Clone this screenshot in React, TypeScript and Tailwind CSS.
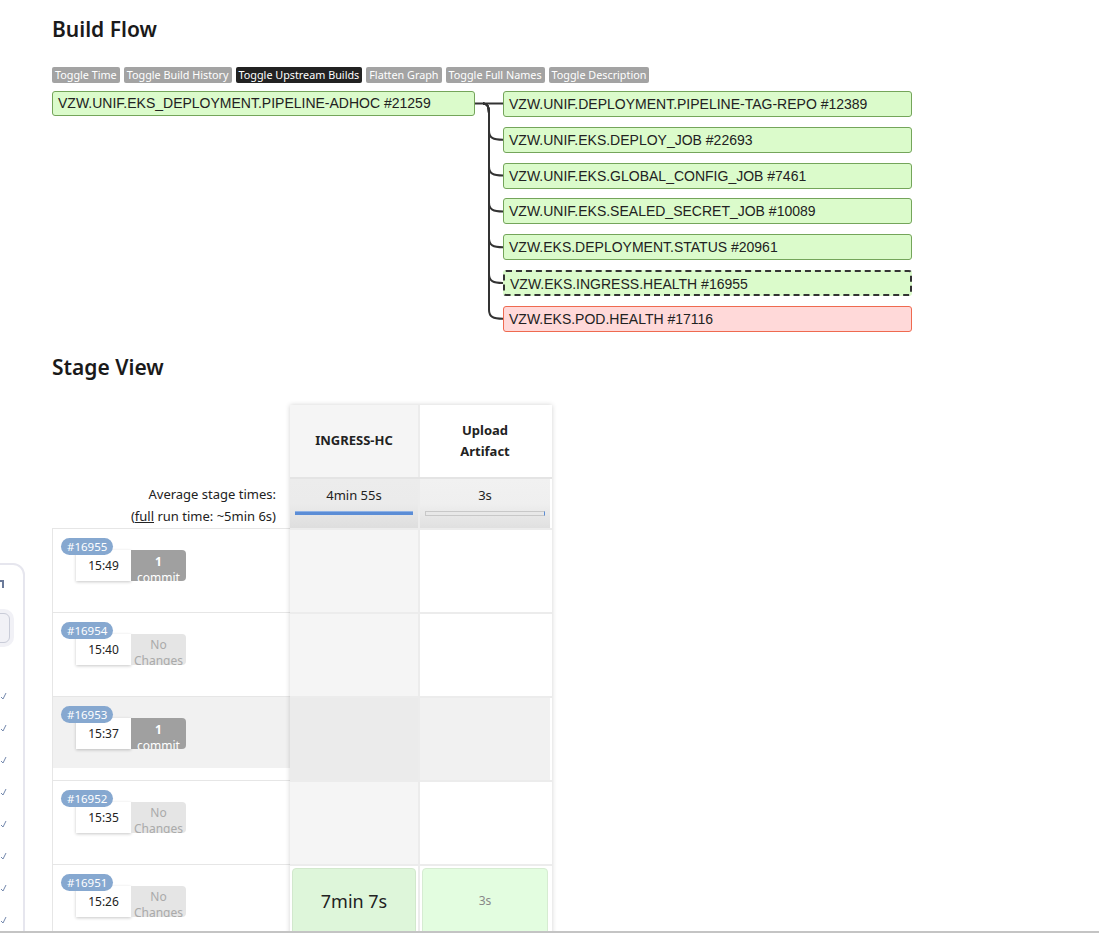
import React from "react";

const ui = { fontFamily: '"Noto Sans", "Open Sans", sans-serif' };
const arial = { fontFamily: '"Liberation Sans", Arial, sans-serif' };

const toggles = [
    { label: "Toggle Time", dark: false },
    { label: "Toggle Build History", dark: false },
    { label: "Toggle Upstream Builds", dark: true },
    { label: "Flatten Graph", dark: false },
    { label: "Toggle Full Names", dark: false },
    { label: "Toggle Description", dark: false },
];

const children = [
    { name: "VZW.UNIF.DEPLOYMENT.PIPELINE-TAG-REPO #12389", kind: "ok" },
    { name: "VZW.UNIF.EKS.DEPLOY_JOB #22693", kind: "ok" },
    { name: "VZW.UNIF.EKS.GLOBAL_CONFIG_JOB #7461", kind: "ok" },
    { name: "VZW.UNIF.EKS.SEALED_SECRET_JOB #10089", kind: "ok" },
    { name: "VZW.EKS.DEPLOYMENT.STATUS #20961", kind: "ok" },
    { name: "VZW.EKS.INGRESS.HEALTH #16955", kind: "running" },
    { name: "VZW.EKS.POD.HEALTH #17116", kind: "failed" },
];

const builds = [
    { id: "#16955", time: "15:49", commits: 1, shaded: false },
    { id: "#16954", time: "15:40", commits: 0, shaded: false },
    { id: "#16953", time: "15:37", commits: 1, shaded: true },
    { id: "#16952", time: "15:35", commits: 0, shaded: false },
    { id: "#16951", time: "15:26", commits: 0, shaded: false },
];

const nodeClass = (kind: string) => {
    if (kind === "failed") return "bg-[#ffd9d9] border border-[#ef6a50]";
    if (kind === "running") return "bg-[#dbfbcb] border-2 border-dashed border-[#333]";
    return "bg-[#dbfbcb] border border-[#74a55a]";
};

// connector lines between root job and its downstream jobs
const Connectors = () => {
    const pitch = 35.8;
    const top = 13;
    return (
        <svg width="28" height="245" className="shrink-0">
            <path d="M0 12.5 H28" stroke="#333" strokeWidth="2" fill="none" />
            {children.slice(1).map((_, i) => {
                const cy = top + pitch * (i + 1);
                return (
                    <path
                        key={i}
                        d={`M8 12.5 C13 12.5 14 16 14 22 V${cy - 9} C14 ${cy - 2} 18 ${cy} 28 ${cy}`}
                        stroke="#333"
                        strokeWidth="2"
                        fill="none"
                    />
                );
            })}
        </svg>
    );
};

const BuildRow = ({ b }: { b: (typeof builds)[number] }) => (
    <div className="h-[84px] border-t border-[#e6e6e6] border-l border-l-[#e6e6e6]">
        <div className={`h-[71px] ${b.shaded ? "bg-[#f1f1f1]" : ""} pt-[9px] flex flex-col`}>
            <span className="relative z-10 self-start ml-[8px] h-[17px] px-[6px] rounded-full bg-[#86a8d0] text-white text-[11.5px] leading-[17px]">
                {b.id}
            </span>
            <div className="flex ml-[23px] mt-[-5px]">
                <div className="w-[55px] h-[31px] bg-white shadow-[0_1px_3px_rgba(0,0,0,0.22)] flex items-center justify-center text-[12px] text-[#222]">
                    {b.time}
                </div>
                {b.commits > 0 ? (
                    <div className="w-[55px] h-[31px] overflow-hidden rounded-r-[4px] bg-[#a0a0a0] text-white text-center text-[12px] leading-[16px] pt-[4px]">
                        <div className="font-bold">{b.commits}</div>
                        <div>commit</div>
                    </div>
                ) : (
                    <div className="w-[55px] h-[31px] overflow-hidden rounded-r-[4px] bg-[#e5e5e5] text-[#aaa] text-center text-[12px] leading-[16px] pt-[3px]">
                        <div>No</div>
                        <div>Changes</div>
                    </div>
                )}
            </div>
        </div>
    </div>
);

const StageRow = ({ i }: { i: number }) => {
    const shaded = builds[i].shaded;
    if (i === 4) {
        return (
            <div className="flex h-[84px] border-t-2 border-[#ececec]">
                <div className="w-[130px] border-r-2 border-[#ececec] px-[2px] pt-[2px]">
                    <div className="h-full rounded-[4px] border border-[#d2e8cd] bg-[#def6da] flex items-center justify-center text-[18px] text-[#222] pb-[14px]">
                        7min 7s
                    </div>
                </div>
                <div className="w-[130px] px-[2px] pt-[2px]">
                    <div className="h-full rounded-[4px] border border-[#d6ecd2] bg-[#e3fde0] flex items-center justify-center text-[12px] text-[#888] pb-[14px]">
                        3s
                    </div>
                </div>
            </div>
        );
    }
    return (
        <div className="flex h-[84px] border-t-2 border-[#ececec]">
            <div className={`w-[130px] border-r-2 border-[#ececec] ${shaded ? "bg-[#ebebeb]" : "bg-[#f5f5f5]"}`} />
            <div className={`w-[130px] ${shaded ? "bg-[#f1f1f1]" : "bg-white"}`} />
        </div>
    );
};

export default function App() {
    return (
        <div
            className="relative h-[933px] overflow-hidden bg-white border-b-2 border-[#c4c4c4] text-[#222]"
            style={ui}
        >
            {/* collapsed side panel peeking in from the left */}
            <div className="absolute left-[-50px] top-[563px] w-[75px] h-[420px] rounded-[12px] border-2 border-[#e6e6ee] bg-white">
                <div className="ml-[46px] mt-[15px] w-[6px] h-[8px] border-t-2 border-r-2 border-[#6b7a99]" />
                <div className="ml-[20px] mt-[21px] w-[42px] h-[38px] rounded-[10px] bg-[#f1f1f6] p-[4px]">
                    <div className="w-full h-full rounded-[6px] border border-[#c9ccd8]" />
                </div>
                <div className="flex flex-col mt-[42px] gap-[20px] ml-[49px]">
                    {Array.from({ length: 8 }).map((_, i) => (
                        <svg key={i} width="6" height="12" viewBox="0 0 6 12">
                            <path d="M0 8 L2 10 L5 4" stroke="#7388ad" strokeWidth="1" fill="none" />
                        </svg>
                    ))}
                </div>
            </div>

            <div className="pl-[52px]">
                {/* Build Flow */}
                <h2 className="pt-[14px] text-[21px] leading-[30px] font-semibold text-[#1a1a1a]">Build Flow</h2>

                <div className="flex gap-[4px] mt-[23px]">
                    {toggles.map((t) => (
                        <span
                            key={t.label}
                            className={`h-[16px] px-[3px] rounded-[2px] text-[10.8px] leading-[16px] text-white ${
                                t.dark ? "bg-[#222]" : "bg-[#a3a3a3]"
                            }`}
                        >
                            {t.label}
                        </span>
                    ))}
                </div>

                <div className="flex items-start mt-[8px]" style={arial}>
                    <div className={`w-[423px] h-[25px] rounded-[3px] pl-[5px] text-[14px] leading-[23px] ${nodeClass("ok")}`}>
                        VZW.UNIF.EKS_DEPLOYMENT.PIPELINE-ADHOC #21259
                    </div>
                    <Connectors />
                    <div className="flex flex-col gap-[9.8px]">
                        {children.map((c) => (
                            <div
                                key={c.name}
                                className={`w-[409px] h-[26px] rounded-[3px] pl-[5px] text-[14px] leading-[24px] ${nodeClass(c.kind)}`}
                            >
                                {c.name}
                            </div>
                        ))}
                    </div>
                </div>

                {/* Stage View */}
                <h2 className="mt-[16px] text-[21px] leading-[30px] font-semibold text-[#1a1a1a]">Stage View</h2>

                <div className="flex mt-[23px]">
                    {/* left column */}
                    <div className="w-[238px]">
                        <div className="h-[72px]" />
                        <div className="h-[51px] pr-[14px] text-right text-[13px] leading-[22px] pt-[6px]">
                            <div>Average stage times:</div>
                            <div>
                                (<span className="underline">full</span> run time: ~5min 6s)
                            </div>
                        </div>
                        {builds.map((b) => (
                            <BuildRow key={b.id} b={b} />
                        ))}
                    </div>

                    {/* stage columns */}
                    <div className="w-[262px] shadow-[0_0_5px_rgba(0,0,0,0.18)] bg-white">
                        <div className="flex h-[72px]">
                            <div className="w-[130px] border-r-2 border-[#ececec] bg-[#f5f5f5] flex items-center justify-center text-[13px] font-bold">
                                INGRESS-HC
                            </div>
                            <div className="w-[130px] bg-white flex items-center justify-center text-center text-[13px] font-bold leading-[21px]">
                                Upload
                                <br />
                                Artifact
                            </div>
                        </div>
                        <div className="flex h-[51px] border-t-2 border-[#e4e4e4]">
                            <div className="w-[130px] border-r-2 border-[#ececec] bg-gradient-to-b from-[#ececec] via-[#ebebeb] to-[#dedede] px-[5px] pt-[6px]">
                                <div className="text-center text-[13px] leading-[20px]">4min 55s</div>
                                <div className="mt-[6px] h-[4px] bg-[#5b8dd6] border-t border-[#8fb2e6]" />
                            </div>
                            <div className="w-[130px] bg-gradient-to-b from-[#f1f1f1] via-[#efefef] to-[#e0e0e0] px-[5px] pt-[6px]">
                                <div className="text-center text-[13px] leading-[20px]">3s</div>
                                <div className="mt-[6px] h-[5px] bg-[#e8e8e8] border border-[#c8c8c8] border-r-[#5b8dd6]" />
                            </div>
                        </div>
                        {builds.map((b, i) => (
                            <StageRow key={b.id} i={i} />
                        ))}
                    </div>
                </div>
            </div>
        </div>
    );
}
